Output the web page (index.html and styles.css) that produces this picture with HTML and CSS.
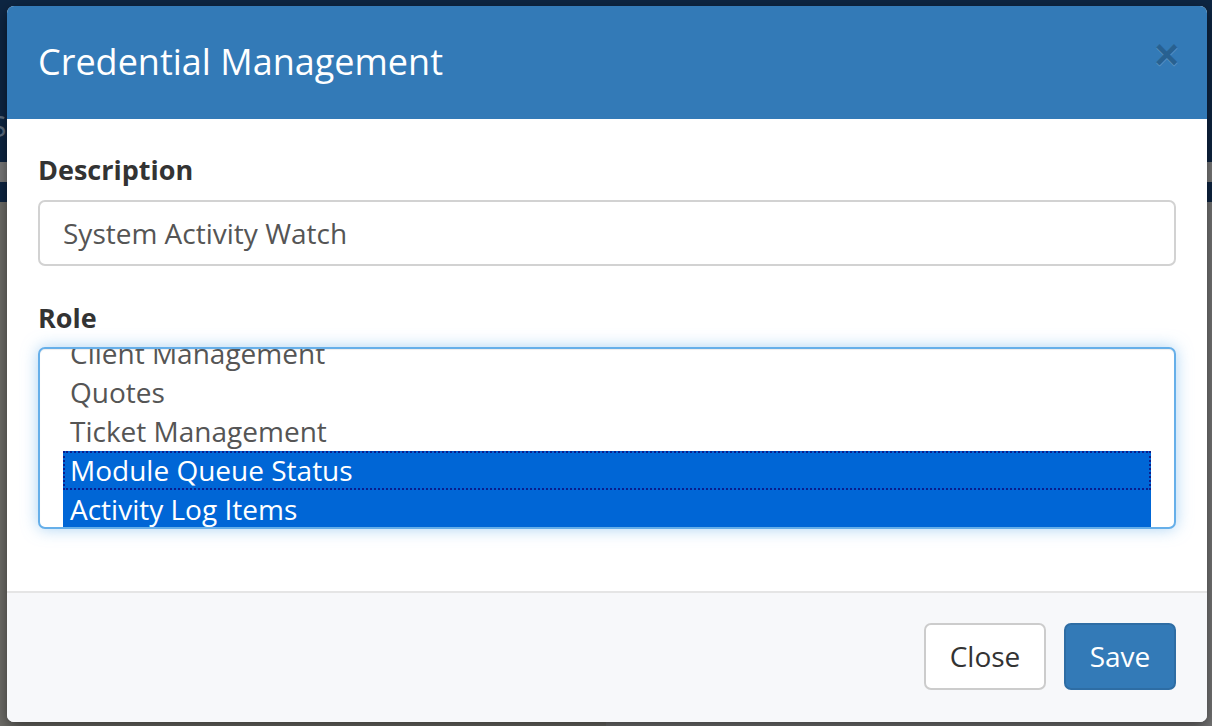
FILE: index.html
```html
<!DOCTYPE html>
<html>
<head>
<meta charset="utf-8">
<link rel="stylesheet" href="styles.css">
</head>
<body>
<div class="page">
  <div class="band navy top"><span class="ghost">S</span></div>
  <div class="band gray"></div>
  <div class="band navy mid"></div>
  <div class="band rest"></div>
</div>
<div class="modal">
  <div class="modal-header">
    <h4 class="modal-title">Credential Management</h4>
    <span class="close">×</span>
  </div>
  <div class="modal-body">
    <label class="lbl">Description</label>
    <div class="input">System Activity Watch</div>
    <label class="lbl role">Role</label>
    <div class="select">
      <div class="options">
        <div class="opt">Client Management</div>
        <div class="opt">Quotes</div>
        <div class="opt">Ticket Management</div>
        <div class="opt sel focus">Module Queue Status</div>
        <div class="opt sel">Activity Log Items</div>
      </div>
    </div>
  </div>
  <div class="modal-footer">
    <button class="btn btn-default">Close</button>
    <button class="btn btn-primary">Save</button>
  </div>
</div>
</body>
</html>
```

FILE: styles.css
```css
html, body {
  margin: 0;
  padding: 0;
  height: 100%;
}
body {
  font-family: "Open Sans", "Noto Sans", sans-serif;
  background: #727270;
  overflow: hidden;
}
.page {
  display: flex;
  flex-direction: column;
  height: 726px;
}
.band.navy.top {
  height: 162px;
  background: #0e2643;
  position: relative;
}
.ghost {
  position: absolute;
  left: -10px;
  top: 105px;
  font-size: 30px;
  color: #5f6e80;
}
.band.gray {
  height: 20px;
  background: #7b7b7b;
}
.band.navy.mid {
  height: 20px;
  background: #0e2643;
}
.band.rest {
  flex: 1;
  background: linear-gradient(to right, #6f6e69 0, #6f6e69 50%, #767676 50%, #767676 100%);
}
.modal {
  position: absolute;
  left: 7px;
  top: 6px;
  width: 1200px;
  height: 716px;
  background: #fff;
  border-radius: 7px;
  overflow: hidden;
  display: flex;
  flex-direction: column;
  box-shadow: 0 5px 15px rgba(0,0,0,.5);
}
.modal-header {
  height: 113px;
  background: #337ab7;
  display: flex;
  align-items: center;
  justify-content: space-between;
  padding: 0 31px;
  box-sizing: border-box;
}
.modal-title {
  margin: 0;
  color: #fff;
  font-size: 36px;
  font-weight: 400;
  line-height: 1.2;
  padding-bottom: 2px;
}
.close {
  color: #000;
  opacity: .2;
  font-size: 42px;
  font-weight: 700;
  line-height: 1;
  text-shadow: 0 1px 0 #fff;
  margin-right: -3px;
  margin-top: -16px;
  font-family: "Liberation Sans", sans-serif;
}
.modal-body {
  flex: 1;
  padding: 33px 31px 0;
  display: flex;
  flex-direction: column;
}
.lbl {
  display: block;
  font-size: 27px;
  font-weight: 700;
  color: #333;
  line-height: 36px;
  margin-bottom: 12px;
}
.lbl.role {
  margin-top: 34px;
  margin-bottom: 11px;
}
.input {
  height: 66px;
  box-sizing: border-box;
  border: 2px solid #d2d2d2;
  border-radius: 7px;
  padding: 0 23px;
  display: flex;
  align-items: center;
  font-size: 28px;
  color: #555;
}
.select {
  height: 182px;
  box-sizing: border-box;
  border: 2px solid #66afe9;
  border-radius: 7px;
  padding: 0 23px;
  overflow: hidden;
  box-shadow: inset 0 1px 1px rgba(0,0,0,.075), 0 0 16px rgba(102,175,233,.55);
  background: #fff;
}
.options {
  margin-top: -15px;
}
.opt {
  height: 39px;
  line-height: 39px;
  padding: 0 7px;
  font-size: 28px;
  color: #555;
  box-sizing: border-box;
  white-space: nowrap;
}
.opt.sel {
  background: #0066d6;
  color: #fff;
}
.opt.focus {
  outline: 2px dotted #0a1e8c;
  outline-offset: -2px;
}
.modal-footer {
  height: 131px;
  box-sizing: border-box;
  border-top: 2px solid #e5e5e5;
  background: #f7f8fa;
  display: flex;
  align-items: center;
  justify-content: flex-end;
  padding: 0 31px;
  gap: 18px;
}
.btn {
  font-family: "Open Sans", "Noto Sans", sans-serif;
  font-size: 28px;
  height: 67px;
  border-radius: 7px;
  padding: 0;
  cursor: pointer;
  margin-top: -3px;
}
.btn-default {
  background: #fff;
  border: 2px solid #ccc;
  color: #333;
  width: 122px;
}
.btn-primary {
  background: #337ab7;
  border: 2px solid #2e6da4;
  color: #fff;
  width: 112px;
}
```
